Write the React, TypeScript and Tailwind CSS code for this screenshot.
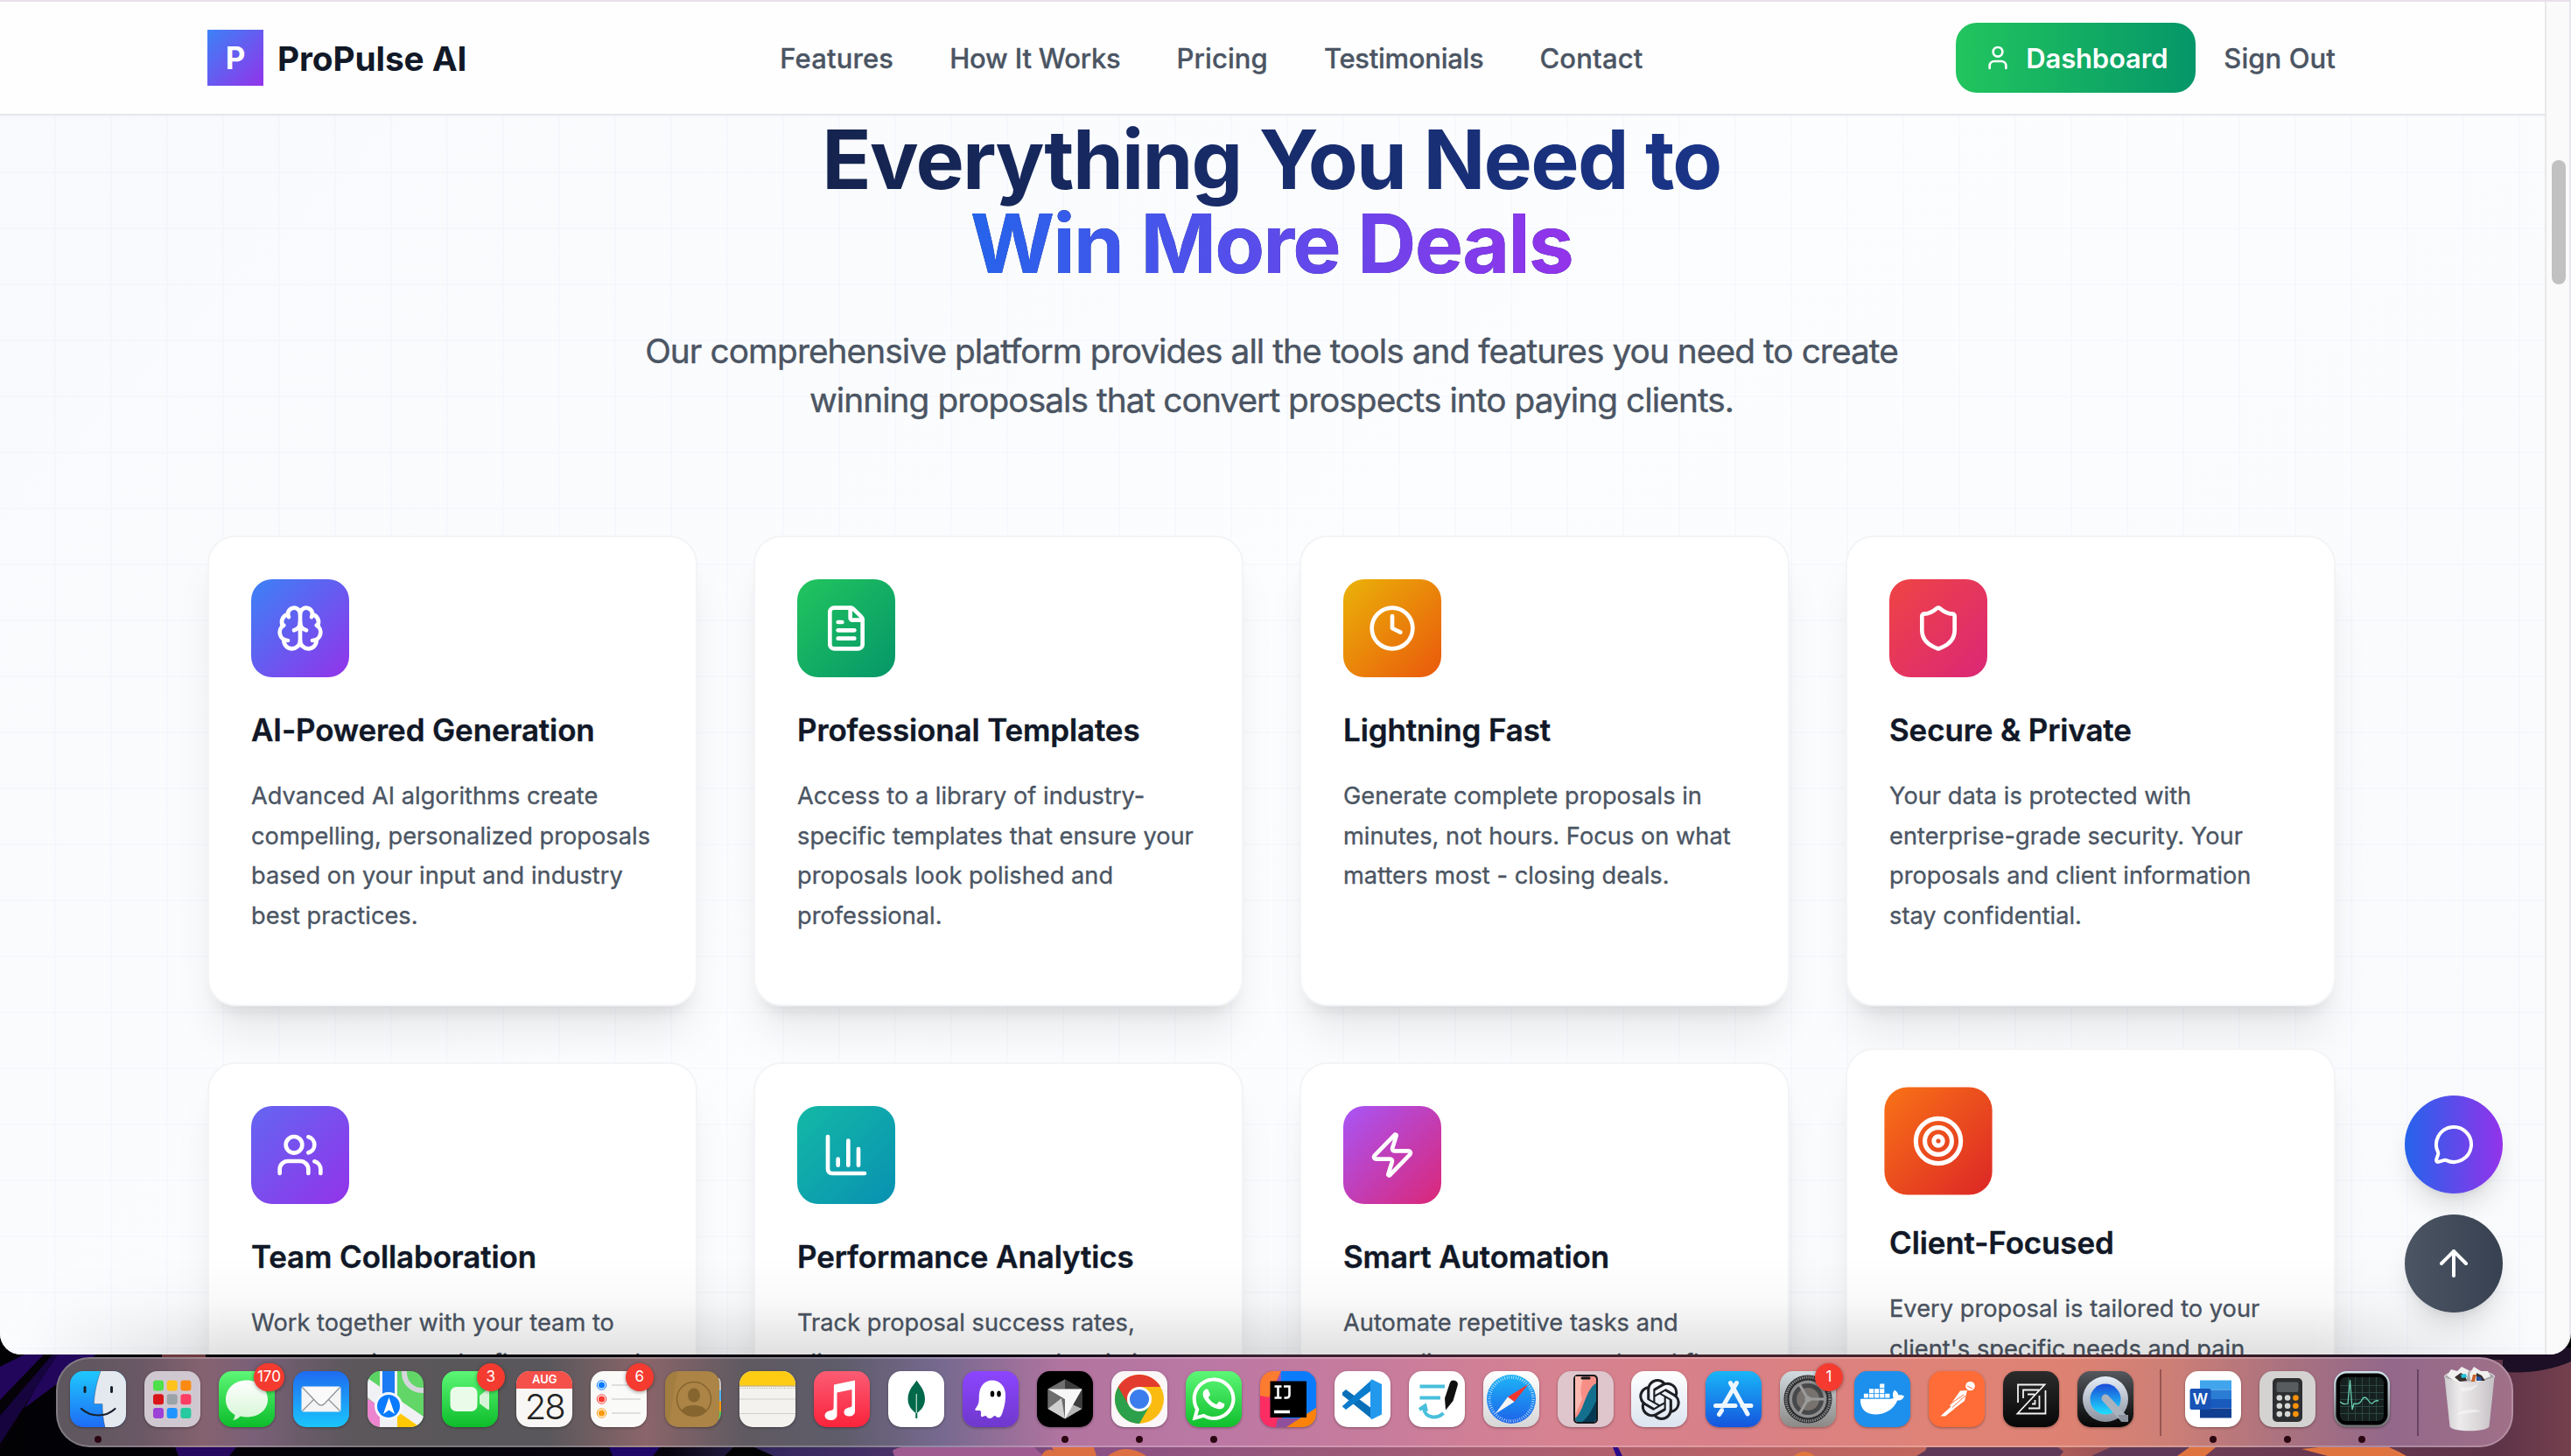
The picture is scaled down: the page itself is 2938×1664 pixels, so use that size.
import React from "react";
import {
  ArrowUp, Brain, ChartColumn, Clock, FileText, MessageCircle, Shield, Target, User, Users, Zap,
} from "lucide-react";
import { FaDocker, FaWhatsapp } from "react-icons/fa";
import { SiOpenai } from "react-icons/si";

const NAV = [
  { label: "Features", cls: "tracking-[0.15px]" },
  { label: "How It Works", cls: "tracking-[-0.2px]" },
  { label: "Pricing", cls: "tracking-[0.1px]" },
  { label: "Testimonials", cls: "tracking-[-0.28px]" },
  { label: "Contact", cls: "tracking-[0.15px]" },
];

type Feature = { icon: React.ElementType; tile: string; title: string; text: string; hovered?: boolean };

const FEATURES: Feature[] = [
  { icon: Brain, tile: "bg-[linear-gradient(135deg,#3b82f6,#9333ea)]", title: "AI-Powered Generation",
    text: "Advanced AI algorithms create\ncompelling, personalized proposals\nbased on your input and industry\nbest practices." },
  { icon: FileText, tile: "bg-[linear-gradient(135deg,#22c55e,#059669)]", title: "Professional Templates",
    text: "Access to a library of industry-\nspecific templates that ensure your\nproposals look polished and\nprofessional." },
  { icon: Clock, tile: "bg-[linear-gradient(135deg,#eab308,#ea580c)]", title: "Lightning Fast",
    text: "Generate complete proposals in\nminutes, not hours. Focus on what\nmatters most - closing deals." },
  { icon: Shield, tile: "bg-[linear-gradient(135deg,#ef4444,#db2777)]", title: "Secure & Private",
    text: "Your data is protected with\nenterprise-grade security. Your\nproposals and client information\nstay confidential." },
  { icon: Users, tile: "bg-[linear-gradient(135deg,#6366f1,#9333ea)]", title: "Team Collaboration",
    text: "Work together with your team to\ncreate, review, and refine proposals" },
  { icon: ChartColumn, tile: "bg-[linear-gradient(135deg,#14b8a6,#0891b2)]", title: "Performance Analytics",
    text: "Track proposal success rates,\nclient engagement, and optimize" },
  { icon: Zap, tile: "bg-[linear-gradient(135deg,#a855f7,#db2777)]", title: "Smart Automation",
    text: "Automate repetitive tasks and\nstreamline your proposal workflow" },
  { icon: Target, tile: "bg-[linear-gradient(135deg,#f97316,#dc2626)]", title: "Client-Focused", hovered: true,
    text: "Every proposal is tailored to your\nclient's specific needs and pain" },
];

function Header() {
  return (
    <header className="flex h-[130px] w-[2908px] shrink-0 border-b-2 border-[#e5e7eb] bg-[#fefefe] pl-[237px]">
      <div className="flex w-[2432px] items-center justify-between">
        <div className="flex items-center gap-4">
          <div className="flex size-16 items-center justify-center bg-[linear-gradient(135deg,#3b82f6,#9333ea)] text-[34.9px] font-bold text-white">P</div>
          <span className="pt-px text-[38.8px] leading-[56px] font-bold tracking-[-0.1px] text-[#111827]">ProPulse AI</span>
        </div>
        <nav className="flex gap-16 pt-0.5 text-[31px] leading-[48px] font-medium text-[#4b5563] [-webkit-text-stroke:0.3px]">
          {NAV.map((n) => <a key={n.label} className={n.cls}>{n.label}</a>)}
        </nav>
        <div className="flex items-center gap-8 text-[31px] leading-[48px] font-medium">
          <button className="flex h-20 w-[274px] items-center gap-4 rounded-[24px] bg-[linear-gradient(90deg,#22c55e,#059669)] pl-8 text-white">
            <User size={32} strokeWidth={2} />
            <span className="pt-px font-semibold tracking-[-0.15px]">Dashboard</span>
          </button>
          <a className="pt-px tracking-[0.1px] text-[#4b5563] [-webkit-text-stroke:0.3px]">Sign Out</a>
        </div>
      </div>
    </header>
  );
}

function Card({ icon: Icon, tile, title, text, hovered }: Feature) {
  return (
    <article className={`h-[538px] rounded-[32px] border-2 border-[#f3f4f6] bg-white p-12 shadow-[0_40px_50px_-10px_rgba(0,0,0,0.08),0_16px_20px_-12px_rgba(0,0,0,0.1)] ${hovered ? "-translate-y-4" : ""}`}>
      <div className={`flex size-28 items-center justify-center rounded-[24px] ${tile} ${hovered ? "scale-110" : ""}`}>
        <Icon size={56} strokeWidth={2} className="text-white" />
      </div>
      <h3 className="mt-8 text-[34.9px] leading-[56px] font-semibold tracking-[-0.08px] whitespace-nowrap text-[#111827] [-webkit-text-stroke:0.4px]">{title}</h3>
      <p className="mt-[25px] text-[27.2px] leading-[45.5px] tracking-[0.03px] whitespace-pre text-[#4b5563] [-webkit-text-stroke:0.35px]">{text}</p>
    </article>
  );
}

function Browser() {
  return (
    <div className="relative flex h-[1548px] flex-col overflow-hidden rounded-b-[24px] border-t-2 border-r-2 border-t-[#e8e0ea] border-r-[#e9e6ec] bg-[#fafafa]">
      <div className="flex h-full">
        <div className="h-full w-[2908px] overflow-hidden bg-[linear-gradient(to_right,rgba(99,102,241,0.022)_2px,transparent_2px),linear-gradient(to_bottom,rgba(99,102,241,0.022)_2px,transparent_2px),linear-gradient(135deg,#f8f9fc,#fcfdfe_50%,#f9fafc)] bg-[size:64px_64px,64px_64px,100%_100%] bg-[position:62px_2px,62px_2px,0_0]">
          <Header />
          <main className="flex w-[2432px] flex-col pt-[2px] ml-[237px]">
            <h2 className="bg-[linear-gradient(90deg,#111827,#1e40af)] bg-clip-text text-center text-[93px] leading-[96px] font-bold tracking-[-1.77px] text-transparent">
              Everything You Need to
              <br />
              <span className="bg-[linear-gradient(90deg,#2563eb,#9333ea)] bg-clip-text text-transparent">Win More Deals</span>
            </h2>
            <p className="mt-[47px] -mb-px text-center text-[38.8px] leading-[56px] tracking-[-0.94px] whitespace-pre-line text-[#4b5563] [-webkit-text-stroke:0.4px]">
              {"Our comprehensive platform provides all the tools and features you need to create\nwinning proposals that convert prospects into paying clients."}
            </p>
            <section className="mt-32 grid grid-cols-4 gap-16">
              {FEATURES.map((f) => <Card key={f.title} {...f} />)}
            </section>
          </main>
        </div>
        <div className="h-full w-[28px] border-l-2 border-[#e8e8e8] bg-[#fafafa] pt-[181px] pl-1.5">
          <div className="h-[142px] w-4 rounded-full bg-[#c1c1c1]" />
        </div>
      </div>
      <div className="absolute bottom-0 left-0 h-[110px] w-full bg-[linear-gradient(to_bottom,rgba(0,0,0,0),rgba(0,0,0,0.025)_45%,rgba(0,0,0,0.12))] [mask-image:linear-gradient(to_right,transparent_20px,#000_260px,#000_2640px,transparent_2890px)]" />
      <div className="absolute right-[76px] bottom-12 flex flex-col gap-6 text-white">
        <button className="flex size-28 items-center justify-center rounded-full bg-[linear-gradient(90deg,#2563eb,#9333ea)] shadow-[0_20px_30px_-6px_rgba(0,0,0,0.12),0_8px_12px_-8px_rgba(0,0,0,0.12)]">
          <MessageCircle size={48} strokeWidth={2} />
        </button>
        <button className="flex size-28 items-center justify-center rounded-full bg-[linear-gradient(90deg,#4b5563,#374151)] shadow-[0_20px_30px_-6px_rgba(0,0,0,0.12),0_8px_12px_-8px_rgba(0,0,0,0.12)]">
          <ArrowUp size={48} strokeWidth={2} />
        </button>
      </div>
    </div>
  );
}

function Wallpaper() {
  return (
    <svg className="absolute inset-x-0 bottom-0 h-[124px] w-full" viewBox="0 1540 2938 124" preserveAspectRatio="none">
      <defs>
        <linearGradient id="wall" x1="0" x2="1">
          <stop offset="0" stopColor="#020104" />
          <stop offset="0.26" stopColor="#07040f" />
          <stop offset="0.3" stopColor="#33265c" />
          <stop offset="0.35" stopColor="#4a3268" />
          <stop offset="0.42" stopColor="#8a4f85" />
          <stop offset="0.52" stopColor="#9a5a78" />
          <stop offset="0.64" stopColor="#b3606a" />
          <stop offset="0.78" stopColor="#c4685a" />
          <stop offset="0.86" stopColor="#6d3c55" />
          <stop offset="0.97" stopColor="#5d3347" />
          <stop offset="1" stopColor="#74404e" />
        </linearGradient>
        <linearGradient id="gap" x1="0" x2="1">
          <stop offset="0" stopColor="#020104" />
          <stop offset="0.4" stopColor="#0a0612" />
          <stop offset="0.5" stopColor="#3a2030" />
          <stop offset="0.85" stopColor="#4a2428" />
          <stop offset="0.95" stopColor="#1c0f22" />
        </linearGradient>
      </defs>
      <rect y="1540" width="2938" height="124" fill="url(#wall)" />
      <rect y="1540" width="2880" height="14" fill="url(#gap)" />
      <path d="M0 1562 28 1548H110L0 1630Z" fill="#22065c" />
      <path d="M0 1600 50 1548H62L0 1660Z" fill="#050208" />
      <path d="M0 1618 60 1548H66L0 1650Z" fill="#16043e" />
      <path d="M2860 1540H2938V1556C2915 1566 2890 1570 2860 1568Z" fill="#1c0f26" />
      <path d="M185 1548h50v6h-50z" fill="#6d3a3e" />
      <path d="M200 1654h70l-8 10h-58z" fill="#25075e" />
      <path d="M696 1654h58l-8 10h-46z" fill="#1e0766" />
      <path d="M828 1664l10-10h24l22 10z" fill="#020104" />
      <path d="M1020 1658q5-4 12-4h150l10 10H1022z" fill="#a05a92" />
      <path d="M1190 1664q5-10 14-6l-2-4h48l3 10zM1266 1664q20-16 44 0z" fill="#dc7042" />
      <path d="M1843 1654h6l5 10h-7z" fill="#2a0a86" />
      <path d="M2050 1664q12-10 24 0z" fill="#e07840" />
      <path d="M2190 1664l10-6 2-4h60l90 0 6 5-4 5z" fill="#5e3a58" />
      <path d="M2390 1664l22-10h90l-14 10z" fill="#5e3a58" />
      <path d="M2488 1664l14-10h30l-12 10zM2630 1656l20-2h80q10 4 20 10H2660z" fill="#e07440" />
    </svg>
  );
}

const S = ({ children }: { children: React.ReactNode }) => <svg viewBox="0 0 64 64" className="size-16">{children}</svg>;

type App = { name: string; tile: string; art: React.ReactNode; badge?: string; running?: boolean };

const knob = (i: number) => ["#4ee04a", "#ffc21a", "#fa8a12", "#d8161a", "#9aa3a8", "#ff3d63", "#9d40d8", "#1f94ff", "#26c9a0"][i];

const APPS: App[] = [
  { name: "finder", running: true, tile: "bg-[linear-gradient(#1fc8fd,#1e6cf5)]", art: (
    <S>
      <path d="M35 0C30 14 27.500 28 27.500 37.500H37C37 47 38 56 40 64H64V0Z" fill="#e4e9f0" />
      <path d="M17 18.500v5M47.500 18.500v5" stroke="#16202c" strokeWidth="3" strokeLinecap="round" />
      <path d="M13 43C24 53 41 53 51.500 43" fill="none" stroke="#16202c" strokeWidth="2.200" strokeLinecap="round" />
      <path d="M35 0C30 14 27.500 28 27.500 37.500H37C37 47 38 56 40 64" fill="none" stroke="#16202c" strokeWidth="0.800" opacity=".4" />
    </S>) },
  { name: "launchpad", tile: "bg-[#d0c8d0]", art: (
    <S>{[0, 1, 2, 3, 4, 5, 6, 7, 8].map((i) => (
      <rect key={i} x={10 + (i % 3) * 15.700} y={10.500 + Math.floor(i / 3) * 15.700} width="12" height="12" rx="3" fill={knob(i)} />))}</S>) },
  { name: "messages", badge: "170", tile: "bg-[linear-gradient(#5df777,#0cbd2a)]", art: (
    <S>
      <defs><linearGradient id="bub" x2="0" y2="1"><stop stopColor="#fff" /><stop offset="1" stopColor="#d5f5d5" /></linearGradient></defs>
      <path d="M32 12C18 12 8 21 8 34.500c0 7 4 13.500 10.500 17-.200 2.500-1 4.500-2.500 6 3.500-.300 6.500-2 8.500-4.500 2.500.700 5 1 7.500 1 14 0 24-8.500 24-20S46 12 32 12Z" fill="url(#bub)" transform="translate(0 -1.500)" />
    </S>) },
  { name: "mail", tile: "bg-[linear-gradient(#1e6bf1,#1bc5fd)]", art: (
    <S>
      <rect x="9.500" y="17.500" width="45" height="29" rx="2.500" fill="#f4f4f4" />
      <path d="M10.500 45.500 25 31M53.500 45.500 39 31" stroke="#8d9298" strokeWidth="1.200" />
      <path d="M10.500 18.500 28 37q4 4 8 0L53.500 18.500" fill="#fafafa" stroke="#8d9298" strokeWidth="1.200" />
    </S>) },
  { name: "maps", tile: "bg-[#62d667]", art: (
    <S>
      <path d="M0 0H17V24L0 12Z" fill="#5bd465" /><path d="M0 8 64 52V64H40L0 30Z" fill="#f0f1f4" />
      <path d="M0 31 22 46V64H0Z" fill="#ec84cf" /><path d="M34 46 60 64H34Z" fill="#ffc800" />
      <path d="M14 0H34V64H14Z" fill="#f0f1f4" /><path d="M17 0H31V36H17Z" fill="#1b7bf5" />
      <circle cx="62" cy="2" r="20" fill="none" stroke="#d5d6dc" strokeWidth="6" />
      <circle cx="24" cy="40" r="16" fill="#f5f6fa" /><circle cx="24" cy="40" r="13" fill="#0a7bff" />
      <path d="M24.500 30 31 49 24.500 44.500 18 49Z" fill="#fff" />
    </S>) },
  { name: "facetime", badge: "3", tile: "bg-[linear-gradient(#5df777,#0cbd2a)]", art: (
    <S><rect x="9.500" y="18" width="31" height="28" rx="7" fill="#eafbea" /><path d="M43 28 52 21q2-1.200 2 1V43q0 2-2 .800L43 37Z" fill="#d8f4d8" /></S>) },
  { name: "calendar", tile: "bg-[#f8f7f5]", art: (
    <div className="flex size-16 flex-col items-center">
      <div className="flex h-5 w-full items-center justify-center bg-[#f5504a] text-[13px] font-semibold text-white">AUG</div>
      <div className="text-[40px] leading-[42px] font-light tracking-[-2px] text-[#222]">28</div>
    </div>) },
  { name: "reminders", badge: "6", tile: "bg-[#fafaf9]", art: (
    <S>{["#0a7bff", "#fa3c32", "#fa9a0a"].map((c, i) => (
      <g key={c}><circle cx="12.500" cy={16 + i * 16} r="5.200" fill="#fff" stroke={c} strokeWidth="1" /><circle cx="12.500" cy={16 + i * 16} r="3.600" fill={c} />
        <path d={`M24 ${16 + i * 16}H57`} stroke="#c3c3c7" strokeWidth="1.200" /></g>))}</S>) },
  { name: "contacts", tile: "bg-transparent", art: (
    <S>
      <path d="M56 8h6q3 2 3 6V22H56Z" fill="#c9c4c0" /><path d="M56 22H64V34H56Z" fill="#4cb4f5" /><path d="M56 34H64V46H56Z" fill="#fa9a0a" /><path d="M56 46H64q0 8-4 10H56Z" fill="#4cd158" />
      <rect width="62" height="64" rx="14" fill="#ab8446" /><path d="M14 0H4Q0 6 0 14V50q0 8 4 13Z" fill="#9c773b" opacity=".5" />
      <circle cx="33" cy="32" r="19.500" fill="none" stroke="#86652f" strokeWidth="1.500" />
      <ellipse cx="33" cy="27.500" rx="7" ry="8" fill="#86652f" /><path d="M19 45q3-6 14-6t14 6q-5 6.500-14 6.500T19 45Z" fill="#86652f" />
    </S>) },
  { name: "notes", tile: "bg-[#f4f2ee]", art: (
    <S><rect width="64" height="16.500" fill="#ffcc14" /><path d="M0 17H64" stroke="#b79a4a" /><path d="M1 19.500H64" stroke="#aaa" strokeDasharray="1 1.500" /><path d="M0 32H64M0 48.500H64" stroke="#cfcdd0" strokeWidth="1.200" /></S>) },
  { name: "music", tile: "bg-[linear-gradient(#fb5c74,#fa233b)]", art: (
    <S><path d="M23 15.500 47 10.500V46c0 3.500-3 5.500-6.500 5.500S34.500 50 34.500 47s2.500-5 6-5.500c2-.300 3-.800 3-2.500V21L26.500 24.500V50.500c0 3.500-3.500 5.500-7 5.500S12.500 54 12.500 51s2.500-5 6-5.700c2.500-.500 4-1 4-3Z" fill="#fff" /></S>) },
  { name: "mongodb", tile: "bg-white", art: (
    <S><path d="M32.500 10.500C30 15 22.500 21 22.500 32c0 8 5 13 9 16h1.500c4-3 9-8 9-16 0-11-7-17-9.500-21.500Z" fill="#00684a" /><path d="M32.300 26V54" stroke="#b8d8c4" strokeWidth="1.300" /><path d="M32.300 48V54" stroke="#00684a" strokeWidth="2" /></S>) },
  { name: "ghost", tile: "bg-[linear-gradient(#8c45ff,#6f38cc)]", art: (
    <S>
      <path d="M33.500 10.500c9.500 0 15.500 7.500 15.500 16.500 0 6-.500 11-2.500 17-1 4-2.500 9-5.500 9-2.500 0-3-2-4.500-2s-2 3-5.500 3-3-3-5-3-3 2-4.500 1c-1.500-1 .500-5-1-6.500s-5 .500-6-1c-1-2 3-3.500 4-9.500.500-4 0-6 .500-9.500 1-8.500 6.500-15 14.500-15Z" fill="#fff" />
      <ellipse cx="34" cy="26" rx="2.300" ry="3.500" /><ellipse cx="41.500" cy="26" rx="2.300" ry="3.500" />
    </S>) },
  { name: "cursor", running: true, tile: "bg-black", art: (
    <S>
      <path d="M32 9.500 51.500 20.500V43L32 54.500 12.500 43V20.500Z" fill="#6a6a6a" /><path d="M32 9.500 51.500 20.500H12.500Z" fill="#3c3c3c" /><path d="M32 9.500V20.500H12.500Z" fill="#6f6f6f" />
      <path d="M12.500 20.500 30 33 12.500 43Z" fill="#6e6e6e" /><path d="M12.500 43 28 31 32 54.500Z" fill="#cfcfcf" /><path d="M51.500 43 40 38 32 54.500Z" fill="#b5b5b5" />
      <path d="M51.500 20.500V43L41 38Z" fill="#3d3d3d" /><path d="M12.500 20.500H51.500L32 54.500V32Z" fill="#f7f7f7" />
    </S>) },
  { name: "chrome", running: true, tile: "bg-[#fbf6f8]", art: (
    <S>
      <circle cx="32" cy="32" r="28" fill="#fbbc12" /><path d="M32 32 7.750 18A28 28 0 0 1 56.250 18H32Z" fill="#e33b2e" />
      <path d="M7.750 18A28 28 0 0 0 32 60L44.100 39 32 32Z" fill="#2da04c" />
      <path d="M7.750 18 20 39 32 32V18Z" fill="#e33b2e" />
      <circle cx="32" cy="32" r="14" fill="#fff" /><circle cx="32" cy="32" r="11" fill="#3b7ded" />
    </S>) },
  { name: "whatsapp", running: true, tile: "bg-[linear-gradient(#5df777,#0fbf2c)]", art: <FaWhatsapp size={56} color="#fff" /> },
  { name: "intellij", tile: "bg-[#0a7cfb]", art: (
    <S>
      <path d="M0 0H24L14 28 20 64H0Z" fill="#fc2f62" /><path d="M0 0H24L10 30 0 28Z" fill="#fb7c30" /><path d="M24 0 10 34 24 26Z" fill="#8a5cc0" />
      <path d="M0 28 14 40 34 64H0Z" fill="#fb2d63" /><path d="M20 54H50L32 64H18Z" fill="#8f4f9c" /><path d="M64 42 30 64H64Z" fill="#fc8209" />
      <rect x="11.500" y="11.500" width="41.500" height="41.500" fill="#000" />
      <path d="M16.500 17.500h8M20.500 17.500v13M16.500 30.500h8M27 17.500h6.500v9.500q0 3.500-3.500 3.500h-2.500" stroke="#fff" strokeWidth="2.600" fill="none" />
      <path d="M16 46.500H34" stroke="#fff" strokeWidth="3.600" />
    </S>) },
  { name: "vscode", tile: "bg-white", art: (
    <S>
      <path d="M9 24.500 13 21 43 43V55L9 27.500Z" fill="#0a6fb8" /><path d="M9 40 43 9.500V21.500L13 44 9 40.500Z" fill="#0b7ccc" />
      <path d="M43 9.500 54 15V49.500L43 55 41 54V11Z" fill="#2399ee" />
    </S>) },
  { name: "textsign", tile: "bg-white", art: (
    <S>
      <path d="M12.500 17.500H41M12.500 30.500H36" stroke="#49bfdc" strokeWidth="4" />
      <path d="M12 44 18.500 39.500 20 46M17 43C19 54 32 55 39.500 48" fill="none" stroke="#49bfdc" strokeWidth="4" />
      <path d="M47 13q2-3.500 6-2t2.500 6L50.500 34 42 44.500 41 31Z" fill="#101010" />
    </S>) },
  { name: "safari", tile: "bg-[linear-gradient(#fff,#d6d6d6)]", art: (
    <S>
      <defs><linearGradient id="saf" x2="0" y2="1"><stop stopColor="#1db4f7" /><stop offset="1" stopColor="#1d62e8" /></linearGradient></defs>
      <circle cx="32" cy="32" r="28" fill="url(#saf)" /><circle cx="32" cy="32" r="25" fill="none" stroke="#d5ecff" strokeWidth="3.500" strokeDasharray="0.700 1.900" />
      <path d="M51.500 15 35.500 35 28 29.500Z" fill="#f4362e" /><path d="M13.500 49 28 29.500 35.500 35Z" fill="#f4f4f4" />
    </S>) },
  { name: "iphone", tile: "bg-[#dec6cc]", art: (
    <S>
      <rect x="18" y="4" width="28" height="56" rx="5" fill="#16191c" /><rect x="20" y="6" width="24" height="52" rx="3.500" fill="#f78f86" />
      <path d="M20 6h10q-6 14-2 26l-8 18Z" fill="#fbb9b0" /><path d="M44 14V54q0 4-4 4H24q-4 0-4-4C30 46 32 20 44 14Z" fill="#12708e" /><path d="M44 34V54q0 4-4 4H28C36 52 40 42 44 34Z" fill="#073a52" />
      <path d="M28 8h8" stroke="#16191c" strokeWidth="3" strokeLinecap="round" />
    </S>) },
  { name: "chatgpt", tile: "bg-[linear-gradient(#fff,#dbe4f0)]", art: <SiOpenai size={47} color="#1d1f24" /> },
  { name: "appstore", tile: "bg-[linear-gradient(#19b6f8,#1555dd)]", art: (
    <S>
      <path d="M35.500 13.500 20 40M28.500 13.500 48 49M11.500 39.500H34M42 39.500H52M18.500 45 15.500 49.500" stroke="#eef6ff" strokeWidth="5" strokeLinecap="round" />
    </S>) },
  { name: "settings", badge: "1", tile: "bg-[linear-gradient(#d0dbe0,#8b8986)]", art: (
    <S>
      <circle cx="32" cy="32" r="27.500" fill="#2c2d2f" /><circle cx="32" cy="32" r="25" fill="none" stroke="#8f9092" strokeWidth="3" strokeDasharray="1.300 1.200" />
      <circle cx="32" cy="32" r="21.500" fill="#8e8e8f" /><circle cx="32" cy="32" r="18" fill="#47484a" /><circle cx="32" cy="32" r="13" fill="#77726e" />
      <path d="M32 32H51M32 32 22.500 15.500M32 32 22.500 48.500" stroke="#9b9b9b" strokeWidth="3.200" /><circle cx="32" cy="32" r="3.500" fill="#9b9b9b" />
    </S>) },
  { name: "docker", tile: "bg-[#1d90ed]", art: <FaDocker size={50} color="#fff" /> },
  { name: "postman", tile: "bg-[#ff6c37]", art: (
    <S>
      <circle cx="47.500" cy="17" r="5.300" fill="#fff" /><path d="M44 22 36 22.500 24 39.500 29 43 41 34Z" fill="#fff" />
      <path d="M26 40 13.500 51.500H19L29.500 43" fill="#fff" /><path d="M24 38 40 27M27 41.500 42 28M44 17 50 20" stroke="#ff6c37" strokeWidth="1" />
    </S>) },
  { name: "zed", tile: "bg-[linear-gradient(#2b2b2b,#070707)]", art: (
    <S>
      <path d="M17 36V15.500H47.500L16.500 48.500H48.500V22M23 31V21.500H41M41.500 28V42.500H29M28 26.500H36M36.500 33V37.500H33" fill="none" stroke="#f2f2f2" strokeWidth="1.800" />
    </S>) },
  { name: "quicktime", tile: "bg-[linear-gradient(#55585d,#050505)]", art: (
    <S>
      <defs><linearGradient id="qt" x2="0" y2="1"><stop stopColor="#e6eef8" /><stop offset="1" stopColor="#8b929e" /></linearGradient>
        <linearGradient id="qtb" x2="0" y2="1"><stop stopColor="#1a4bd8" /><stop offset="1" stopColor="#1fe0ff" /></linearGradient></defs>
      <circle cx="32" cy="32" r="26" fill="url(#qt)" /><circle cx="32" cy="32" r="17.500" fill="url(#qtb)" />
      <path d="M32 31 52 53" stroke="#aab2bd" strokeWidth="9" strokeLinecap="round" /><path d="M46 50h12v8h-8Z" fill="#8b929e" />
    </S>) },
];

const RECENT: App[] = [
  { name: "word", running: true, tile: "bg-white", art: (
    <S>
      <path d="M17 10.500H53V21.500H17Z" fill="#41a5ee" /><path d="M17 21.500H53V32H17Z" fill="#2b7cd3" /><path d="M17 32H53V42.500H17Z" fill="#185abd" /><path d="M17 42.500H53V53.500H17Z" fill="#103f91" />
      <rect x="5.500" y="20" width="24" height="24" rx="2" fill="#1853b5" />
      <text x="17.500" y="38" textAnchor="middle" fontSize="17" fontWeight="600" fill="#fff" fontFamily="Inter, sans-serif">W</text>
    </S>) },
  { name: "calculator", running: true, tile: "bg-[#d4d3d1]", art: (
    <S>
      <rect x="15" y="8" width="34" height="50" rx="5" fill="#2d2f31" /><rect x="19.500" y="12.500" width="25" height="11.500" rx="2" fill="#595c5e" />
      {[0, 1, 2, 3, 4, 5, 6, 7, 8].map((i) => <circle key={i} cx={22.800 + (i % 3) * 9.300} cy={30.500 + Math.floor(i / 3) * 9.300} r="3.300" fill={i % 3 === 2 ? "#ff9208" : "#d6d6d4"} />)}
    </S>) },
  { name: "monitor", running: true, tile: "bg-[linear-gradient(#cfe3ec,#6e7072)]", art: (
    <S>
      <rect x="2.500" y="2.500" width="59" height="59" rx="12" fill="#000" /><rect x="7" y="7" width="50" height="50" rx="6" fill="#16211f" />
      <path d="M16.500 7V57M24.500 7V57M32.500 7V57M40.500 7V57M48.500 7V57M7 16.500H57M7 24.500H57M7 32.500H57M7 40.500H57M7 48.500H57" stroke="#2f5049" strokeWidth="0.800" />
      <path d="M7 35q4 4 9 2L18.500 10 21 44 23 37q6 2 9-4t7 0 6 3 6-2" fill="none" stroke="#69cdb0" strokeWidth="1.300" />
    </S>) },
];

function DockIcon({ app }: { app: App }) {
  return (
    <div className="relative flex h-full w-[84.96px] shrink-0 flex-col items-center pt-3.5">
      <div className={`flex size-16 items-center justify-center overflow-hidden rounded-[15px] shadow-[0_1px_3px_rgba(0,0,0,0.35)] ${app.tile}`}>{app.art}</div>
      {app.running && <div className="mt-2.5 size-2 rounded-full bg-[#2a0512]" />}
      {app.badge && (
        <div className="absolute top-[5px] left-[50px] flex h-8 min-w-8 items-center justify-center rounded-full bg-[#f53b30] px-1 text-[17px] text-white shadow-[0_1px_4px_rgba(0,0,0,0.4)]">{app.badge}</div>
      )}
    </div>
  );
}

function Trash() {
  return (
    <svg viewBox="0 0 60 76" className="mt-2 ml-7 h-[76px] w-[60px] shrink-0">
      <defs><linearGradient id="bin" x1="0" x2="1"><stop stopColor="#cfcfd0" /><stop offset=".3" stopColor="#f0f0f0" /><stop offset=".7" stopColor="#dcdadb" /><stop offset="1" stopColor="#c4c2c5" /></linearGradient></defs>
      <ellipse cx="30" cy="12" rx="28.500" ry="6" fill="#a9a5aa" stroke="#e5e5e8" />
      <path d="M4 11 9 4l7 2 5-5 8 4-2 10-12 4ZM30 9 35 1l8 5 8 0 3 6-14 6-9-2Z" fill="#f0efee" />
      <path d="M13 13l7-5 5 3 2 6-8 1ZM38 8l6 3 4 6-10 0Z" fill="#36302e" /><path d="M20 10l6-1 1 4-6 1Z" fill="#22c3d8" /><path d="M34 10l4 0-2 8-4 0Z" fill="#c9622c" /><path d="M38 12l5 1 1 4-5 0Z" fill="#2b55a8" />
      <path d="M1.500 13C10 20 50 20 58.500 13L52.500 69C51 76 9 76 7.500 69Z" fill="url(#bin)" fillOpacity=".96" />
      <path d="M20 24q12 2 20-4-4 10-20 9ZM14 56q14-10 30-4" fill="#fff" opacity=".45" />
    </svg>
  );
}

function Dock() {
  return (
    <div className="absolute bottom-[10px] left-[64px] flex h-[103px] w-[2808px] rounded-[38px] border-2 border-[rgba(255,255,255,0.22)] bg-[linear-gradient(90deg,#5d575e_0%,#6a5865_3.500%,#85626f_6%,#7a6078_8%,#5b575b_12%,#59575b_20%,#8a656a_24%,#5f5a61_28%,#5f5c6b_32%,#76698f_36%,#b274a0_41%,#bb78a4_47%,#c87c9c_54%,#d68291_61%,#d88088_68%,#df8378_76%,#dd8273_82%,#cd7f76_86%,#a87180_91%,#93688a_95%,#a07088_100%)] bg-origin-border pl-[4px]">
      {APPS.map((a) => <DockIcon key={a.name} app={a} />)}
      <div className="mt-3 ml-[19px] h-[76px] w-0.5 shrink-0 bg-[rgba(70,20,30,0.4)]" />
      <div className="ml-[17px] flex">
        {RECENT.map((a) => <DockIcon key={a.name} app={a} />)}
      </div>
      <div className="mt-3 ml-[20px] h-[76px] w-0.5 shrink-0 bg-[rgba(50,20,50,0.45)]" />
      <Trash />
    </div>
  );
}

export default function App() {
  return (
    <div className="relative h-[1664px] w-[2938px] overflow-hidden bg-black font-['Inter',sans-serif]">
      <Wallpaper />
      <Browser />
      <Dock />
    </div>
  );
}
